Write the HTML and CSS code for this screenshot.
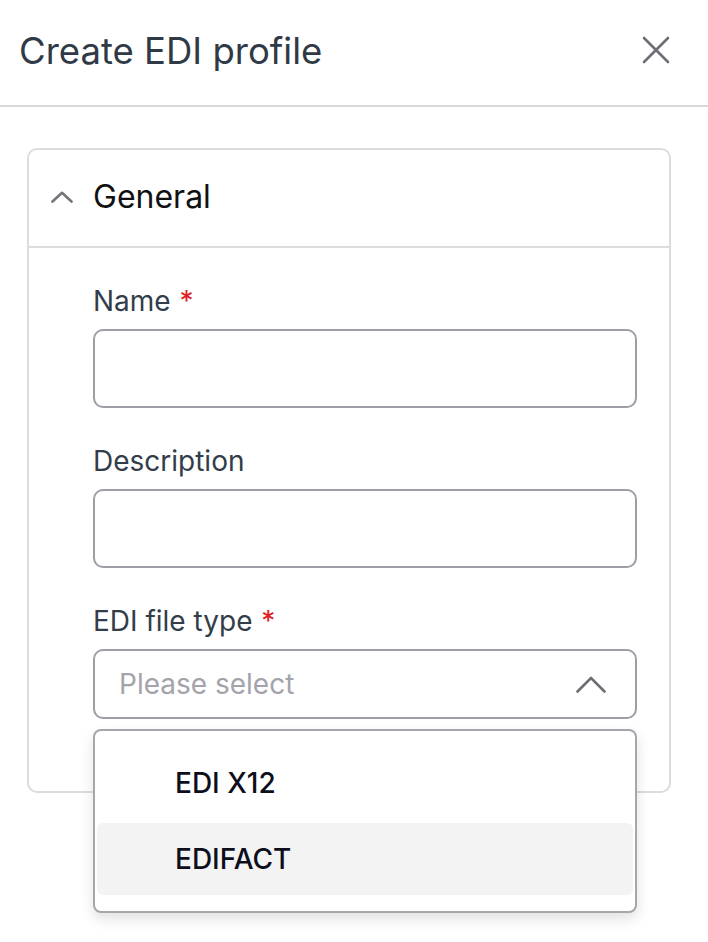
FILE: index.html
```html
<!DOCTYPE html>
<html lang="en">
<head>
<meta charset="utf-8">
<title>Create EDI profile</title>
<link rel="stylesheet" href="styles.css">
</head>
<body>
<header class="modal-header">
  <h1 class="modal-title">Create EDI profile</h1>
  <button class="close-btn" aria-label="Close">
    <svg width="28" height="28" viewBox="0 0 28 28"><path d="M2 2 L26 26 M26 2 L2 26" stroke="currentColor" stroke-width="2.6" stroke-linecap="round" fill="none"/></svg>
  </button>
</header>
<main class="modal-body">
  <section class="card">
    <div class="card-header">
      <svg class="card-chevron" width="22" height="12" viewBox="0 0 22 12"><polyline points="1.5,10.5 11,1.8 20.5,10.5" stroke="currentColor" stroke-width="2.6" stroke-linecap="round" stroke-linejoin="round" fill="none"/></svg>
      <span class="card-title">General</span>
    </div>
    <div class="card-body">
      <div class="field">
        <label class="field-label">Name <span class="req">*</span></label>
        <div class="input"></div>
      </div>
      <div class="field">
        <label class="field-label">Description</label>
        <div class="input"></div>
      </div>
      <div class="field field-select">
        <label class="field-label">EDI file type <span class="req">*</span></label>
        <div class="select">
          <span class="placeholder">Please select</span>
          <svg class="select-chevron" width="30" height="17" viewBox="0 0 30 17"><polyline points="1.5,15.5 15,2 28.5,15.5" stroke="currentColor" stroke-width="2.6" stroke-linecap="round" stroke-linejoin="round" fill="none"/></svg>
        </div>
        <div class="dropdown">
          <div class="option">EDI X12</div>
          <div class="option option-active">EDIFACT</div>
        </div>
      </div>
    </div>
  </section>
</main>
</body>
</html>
```
FILE: styles.css
```css
* { box-sizing: border-box; }
html, body { margin: 0; padding: 0; background: #ffffff; }
body {
  font-family: Inter, "Noto Sans", sans-serif;
  width: 708px;
  height: 942px;
  overflow: hidden;
}
.modal-header {
  height: 107px;
  border-bottom: 2px solid #d8d8db;
  display: flex;
  align-items: center;
  justify-content: space-between;
  padding: 0 38px 0 19px;
}
.modal-title {
  margin: 0;
  font-size: 36.5px;
  font-weight: 400;
  color: #2f3a46;
  line-height: 44px;
  margin-top: -4px;
}
.close-btn {
  border: 0;
  background: none;
  padding: 0;
  color: #6c6e75;
  display: flex;
  margin-top: -6px;
}
.modal-body {
  padding: 41px 37px 0 27px;
}
.card {
  border: 2px solid #dcdcdf;
  border-radius: 10px;
}
.card-header {
  height: 98px;
  border-bottom: 2px solid #dcdcdf;
  display: flex;
  align-items: center;
  padding-left: 22px;
  gap: 20px;
}
.card-chevron { color: #74757b; margin-top: -2px; }
.card-title {
  font-size: 32px;
  line-height: 40px;
  color: #111114;
  font-weight: 400;
  margin-top: -2px;
}
.card-body {
  padding: 37px 32px 72px 64px;
}
.field { margin-bottom: 37px; }
.field:last-child { margin-bottom: 0; }
.field-label {
  display: block;
  font-size: 28px;
  line-height: 32px;
  color: #333d4a;
  margin-bottom: 12px;
}
.req { color: #e0201f; margin-left: 1px; }
.input {
  height: 79px;
  border: 2px solid #9e9fa6;
  border-radius: 10px;
}
.field-select { position: relative; }
.select {
  height: 70px;
  border: 2px solid #9e9fa6;
  border-radius: 10px;
  display: flex;
  align-items: center;
  justify-content: space-between;
  padding: 0 29px 0 24px;
}
.placeholder {
  font-size: 28px;
  color: #a3a4ab;
}
.select-chevron { color: #6c6e75; }
.dropdown {
  position: absolute;
  top: calc(100% + 10px);
  left: 0;
  right: 0;
  background: #ffffff;
  border: 2px solid #a6a7ad;
  border-radius: 8px;
  padding: 16px 2px;
  box-shadow: 0 6px 14px rgba(0, 0, 0, 0.12);
  display: flex;
  flex-direction: column;
  gap: 4px;
  z-index: 2;
}
.option {
  height: 72px;
  display: flex;
  align-items: center;
  padding-left: 78px;
  font-size: 28px;
  font-weight: 500;
  color: #0d0e1c;
  border-radius: 6px;
}
.option-active { background: #f3f3f4; }
```
